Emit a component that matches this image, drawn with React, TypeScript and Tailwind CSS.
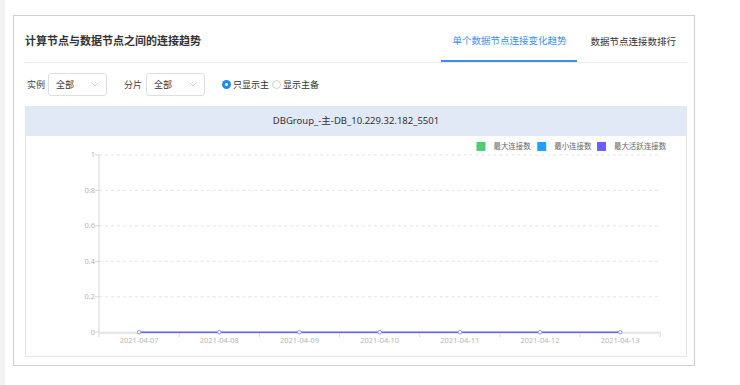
const FONT = { fontFamily: '"Noto Sans", "Noto Sans CJK SC", sans-serif' };

const dates = ["2021-04-07", "2021-04-08", "2021-04-09", "2021-04-10", "2021-04-11", "2021-04-12", "2021-04-13"];
const yTicks = [
  { label: "1", y: 19 },
  { label: "0.8", y: 54.6 },
  { label: "0.6", y: 90.2 },
  { label: "0.4", y: 125.8 },
  { label: "0.2", y: 161.4 },
  { label: "0", y: 197 },
];

function Select() {
  return (
    <div className="flex h-[23px] w-[59px] items-center justify-between rounded-[3px] border border-[#dcdfe6] bg-white pl-[7px] pr-[7px]">
      <span className="text-[9px] text-[#333]">全部</span>
      <svg width="8" height="5" viewBox="0 0 8 5">
        <path d="M0.5 0.5 L4 4 L7.5 0.5" fill="none" stroke="#c0c4cc" strokeWidth="0.8" />
      </svg>
    </div>
  );
}

function Chart() {
  const x0 = 72;
  const step = 80.5;
  const pts = dates.map((_, i) => x0 + step / 2 + i * step);
  return (
    <svg width="660" height="221" viewBox="0 0 660 221">
      {/* legend */}
      <rect x="451" y="6" width="9" height="9" fill="#4ecb73" />
      <text x="468" y="13.5" fontSize="7.5" fill="#666">最大连接数</text>
      <rect x="512" y="6" width="9" height="9" fill="#1f9fff" />
      <text x="529" y="13.5" fontSize="7.5" fill="#666">最小连接数</text>
      <rect x="572" y="6" width="9" height="9" fill="#6b5cff" />
      <text x="589" y="13.5" fontSize="7.5" fill="#666">最大活跃连接数</text>

      {/* grid */}
      {yTicks.slice(0, 5).map((t) => (
        <line key={t.label} x1={x0} x2="636" y1={t.y} y2={t.y} stroke="#dcdcdc" strokeWidth="0.8" strokeDasharray="3 3" />
      ))}
      {yTicks.map((t) => (
        <g key={"l" + t.label}>
          <line x1={x0 - 4} x2={x0} y1={t.y} y2={t.y} stroke="#ccc" strokeWidth="0.8" />
          <text x="68" y={t.y + 2.5} fontSize="7.5" fill="#b5b5b5" textAnchor="end">{t.label}</text>
        </g>
      ))}
      <line x1={x0} x2={x0} y1="19" y2="197" stroke="#ccc" strokeWidth="0.8" />
      <line x1={x0} x2="636" y1="197.5" y2="197.5" stroke="#e3e3e3" strokeWidth="2" />
      {Array.from({ length: 8 }).map((_, k) => (
        <line key={k} x1={x0 + k * step} x2={x0 + k * step} y1="198" y2="202" stroke="#ccc" strokeWidth="0.8" />
      ))}

      {/* series */}
      <polyline points={pts.map((x) => `${x},197`).join(" ")} fill="none" stroke="#6b5cff" strokeWidth="1.5" />
      {pts.map((x) => (
        <circle key={x} cx={x} cy="197" r="1.8" fill="#fff" stroke="#7b8cff" strokeWidth="0.9" />
      ))}
      {dates.map((d, i) => (
        <text key={d} x={pts[i]} y="207.5" fontSize="7.5" fill="#b5b5b5" textAnchor="middle">{d}</text>
      ))}
    </svg>
  );
}

export default function App() {
  return (
    <div className="flex h-[385px] w-[740px] bg-white" style={FONT}>
      <div className="h-full w-[5px] bg-[#f3f3f3]" />

      <div className="ml-[8px] mt-[15px] flex h-[351px] w-[682px] flex-col border border-[#cfcfcf] pl-[11px] pr-[7px]">
        {/* header */}
        <div className="flex h-[47px] items-stretch justify-between border-b border-[#ebebeb]">
          <div className="flex items-center pt-1 text-[11px] font-semibold text-[#333]">计算节点与数据节点之间的连接趋势</div>
          <div className="flex items-stretch">
            <div className="flex w-[136px] items-center justify-center border-b-2 border-[#3d8fe8] pt-[7px] text-[9.5px] text-[#3d8fe8]">
              单个数据节点连接变化趋势
            </div>
            <div className="ml-[13px] mr-[11px] flex items-center pt-[7px] text-[9.5px] text-[#333]">数据节点连接数排行</div>
          </div>
        </div>

        {/* filters */}
        <div className="mt-[10px] flex h-[23px] items-center text-[9px] text-[#444]">
          <span className="ml-[2px]">实例</span>
          <div className="ml-[3px]">
            <Select />
          </div>
          <span className="ml-[17px]">分片</span>
          <div className="ml-[4px]">
            <Select />
          </div>
          <div className="ml-[17px] flex items-center">
            <span className="flex h-[9px] w-[9px] items-center justify-center rounded-full bg-[#1e8cf5]">
              <span className="h-[3px] w-[3px] rounded-full bg-white" />
            </span>
            <span className="ml-[2px] text-[#333]">只显示主</span>
            <span className="ml-[3px] h-[9px] w-[9px] rounded-full border border-[#d0d0d0] bg-white" />
            <span className="ml-[2px] text-[#333]">显示主备</span>
          </div>
        </div>

        {/* chart panel */}
        <div className="mt-[10px] flex h-[251px] flex-col border border-[#e6e6e6]">
          <div className="flex h-[29px] items-center justify-center bg-[#e2e9f6] text-[9.5px] text-[#333]">
            DBGroup_-主-DB_10.229.32.182_5501
          </div>
          <Chart />
        </div>
      </div>
    </div>
  );
}
